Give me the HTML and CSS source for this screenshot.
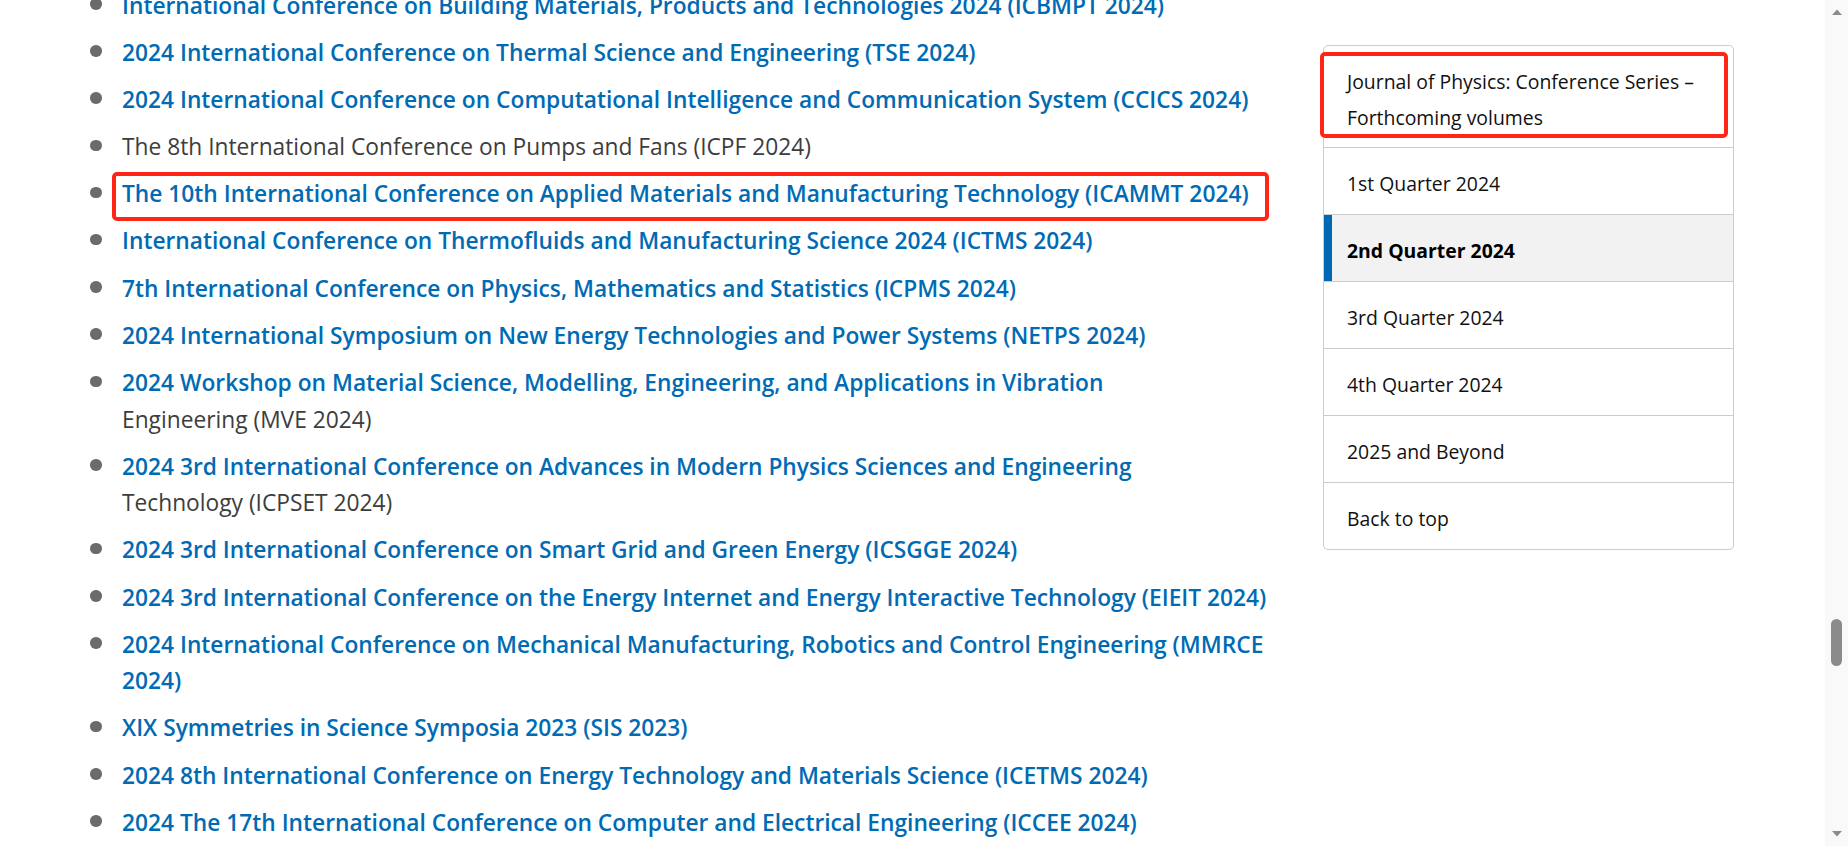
FILE: index.html
```html
<!DOCTYPE html>
<html lang="en">
<head>
<meta charset="utf-8">
<title>Journal of Physics: Conference Series – Forthcoming volumes</title>
<link rel="stylesheet" href="styles.css">
</head>
<body>
<div class="window">
  <div class="page">
    <div class="layout">
      <main class="main">
        <ul class="conf-list">
          <li><a href="#">International Conference on Building Materials, Products and Technologies 2024 (ICBMPT 2024)</a></li>
          <li><a href="#">2024 International Conference on Thermal Science and Engineering (TSE 2024)</a></li>
          <li><a href="#">2024 International Conference on Computational Intelligence and Communication System (CCICS 2024)</a></li>
          <li><span>The 8th International Conference on Pumps and Fans (ICPF 2024)</span></li>
          <li class="marked"><a href="#">The 10th International Conference on Applied Materials and Manufacturing Technology (ICAMMT 2024)</a><span class="annot annot-item"></span></li>
          <li><a href="#">International Conference on Thermofluids and Manufacturing Science 2024 (ICTMS 2024)</a></li>
          <li><a href="#">7th International Conference on Physics, Mathematics and Statistics (ICPMS 2024)</a></li>
          <li><a href="#">2024 International Symposium on New Energy Technologies and Power Systems (NETPS 2024)</a></li>
          <li><span><a href="#">2024 Workshop on Material Science, Modelling, Engineering, and Applications in Vibration</a><br>Engineering (MVE 2024)</span></li>
          <li><span><a href="#">2024 3rd International Conference on Advances in Modern Physics Sciences and Engineering</a><br>Technology (ICPSET 2024)</span></li>
          <li><a href="#">2024 3rd International Conference on Smart Grid and Green Energy (ICSGGE 2024)</a></li>
          <li><a href="#">2024 3rd International Conference on the Energy Internet and Energy Interactive Technology (EIEIT 2024)</a></li>
          <li><a href="#">2024 International Conference on Mechanical Manufacturing, Robotics and Control Engineering (MMRCE 2024)</a></li>
          <li><a href="#">XIX Symmetries in Science Symposia 2023 (SIS 2023)</a></li>
          <li><a href="#">2024 8th International Conference on Energy Technology and Materials Science (ICETMS 2024)</a></li>
          <li><a href="#">2024 The 17th International Conference on Computer and Electrical Engineering (ICCEE 2024)</a></li>
        </ul>
      </main>
      <aside class="sidebar">
        <div class="side-head">Journal of Physics: Conference Series –<br>Forthcoming volumes<span class="annot annot-head"></span></div>
        <a class="side-item" href="#">1st Quarter 2024</a>
        <a class="side-item active" href="#">2nd Quarter 2024</a>
        <a class="side-item" href="#">3rd Quarter 2024</a>
        <a class="side-item" href="#">4th Quarter 2024</a>
        <a class="side-item" href="#">2025 and Beyond</a>
        <a class="side-item" href="#">Back to top</a>
      </aside>
    </div>
  </div>
  <div class="scrollbar">
    <svg class="sb-arrow sb-up" width="12" height="8" viewBox="0 0 12 8"><path d="M1 7 L6 1.5 L11 7 Z" fill="#8b8b8b"/></svg>
    <div class="sb-thumb"></div>
    <div class="sb-space"></div>
    <svg class="sb-arrow sb-down" width="12" height="8" viewBox="0 0 12 8"><path d="M1 1 L6 6.5 L11 1 Z" fill="#8b8b8b"/></svg>
  </div>
</div>
</body>
</html>
```
FILE: styles.css
```css
html, body {
  margin: 0;
  padding: 0;
  background: #ffffff;
}

body {
  font-family: "Open Sans", "Noto Sans", sans-serif;
  color: #3d3d3d;
  overflow: hidden;
}

.window {
  display: flex;
  width: 1848px;
  height: 846px;
  overflow: hidden;
}

.page {
  flex: 1;
  min-width: 0;
  overflow: hidden;
}

.layout {
  display: flex;
  align-items: flex-start;
  padding-left: 90px;
}

/* ---------- conference list ---------- */
.main {
  width: 1200px;
  flex: none;
}

.conf-list {
  list-style: none;
  margin: -12.5px 0 0 0;
  padding: 0;
  font-size: 22.75px;
  line-height: 36.5px;
}

.conf-list li {
  display: flex;
  position: relative;
  margin-bottom: 10.7px;
}

.conf-list li::before {
  content: "";
  flex: none;
  width: 11.5px;
  height: 11.5px;
  border-radius: 50%;
  background: #6b6b6b;
  margin-top: 10.5px;
  margin-right: 20.5px;
}

.conf-list a {
  color: #006bb4;
  font-weight: 600;
  text-decoration: none;
}

.conf-list span {
  color: #3d3d3d;
  font-weight: 400;
}

/* ---------- sidebar ---------- */
.sidebar {
  flex: none;
  width: 411px;
  box-sizing: border-box;
  margin-top: 45px;
  margin-left: 33px;
  border: 1px solid #cccccc;
  border-radius: 5px;
  font-size: 19.4px;
  line-height: 36.3px;
  color: #111111;
}

.side-head {
  position: relative;
  padding: 17.5px 23px 11px 23px;
}

.side-item {
  display: block;
  padding: 18px 23px 12px 23px;
  line-height: 36px;
  border-top: 1px solid #cccccc;
  color: #111111;
  text-decoration: none;
}

.side-item.active {
  background: #f2f2f2;
  box-shadow: inset 8px 0 0 #0069b4;
  font-weight: 700;
  color: #000000;
}

.side-item:last-child {
  border-radius: 0 0 4px 4px;
}

/* ---------- red annotation frames ---------- */
.annot {
  position: absolute;
  border: 4px solid #ff2618;
  border-radius: 5px;
  box-sizing: border-box;
  pointer-events: none;
}

.annot-item {
  left: 22px;
  top: -4.5px;
  width: 1157px;
  height: 49px;
}

.annot-head {
  left: -4px;
  top: 6px;
  width: 408px;
  height: 86px;
}

/* ---------- scrollbar ---------- */
.scrollbar {
  flex: none;
  width: 23px;
  height: 846px;
  background: #f9f9f9;
  display: flex;
  flex-direction: column;
  align-items: center;
}

.sb-arrow {
  flex: none;
  display: block;
}

.sb-up {
  margin-top: 8px;
}

.sb-down {
  margin-bottom: 8px;
}

.sb-thumb {
  flex: none;
  width: 11px;
  height: 47px;
  margin-top: 603px;
  border-radius: 6px;
  background: #8b8b8b;
}

.sb-space {
  flex: 1;
}
```
